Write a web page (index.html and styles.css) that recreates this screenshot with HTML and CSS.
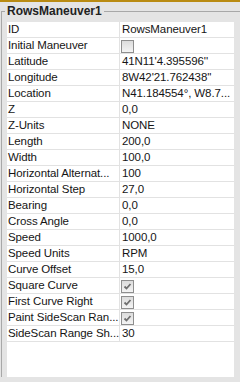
FILE: index.html
```html
<!DOCTYPE html>
<html lang="en">
<head>
    <meta charset="UTF-8">
    <title>RowsManeuver1</title>
    <link rel="stylesheet" href="styles.css">
</head>
<body>

    <fieldset class="group">
        <legend>RowsManeuver1</legend>

        <div class="grid">
            <div class="row"><div class="name">ID</div><div class="value">RowsManeuver1</div></div>
            <div class="row"><div class="name">Initial Maneuver</div><div class="value"><span class="check"></span></div></div>
            <div class="row"><div class="name">Latitude</div><div class="value">41N11'4.395596''</div></div>
            <div class="row"><div class="name">Longitude</div><div class="value">8W42'21.762438''</div></div>
            <div class="row"><div class="name">Location</div><div class="value">N41.184554°, W8.7...</div></div>
            <div class="row"><div class="name">Z</div><div class="value">0,0</div></div>
            <div class="row"><div class="name">Z-Units</div><div class="value">NONE</div></div>
            <div class="row"><div class="name">Length</div><div class="value">200,0</div></div>
            <div class="row"><div class="name">Width</div><div class="value">100,0</div></div>
            <div class="row"><div class="name">Horizontal Alternat...</div><div class="value">100</div></div>
            <div class="row"><div class="name">Horizontal Step</div><div class="value">27,0</div></div>
            <div class="row"><div class="name">Bearing</div><div class="value">0,0</div></div>
            <div class="row"><div class="name">Cross Angle</div><div class="value">0,0</div></div>
            <div class="row"><div class="name">Speed</div><div class="value">1000,0</div></div>
            <div class="row"><div class="name">Speed Units</div><div class="value">RPM</div></div>
            <div class="row"><div class="name">Curve Offset</div><div class="value">15,0</div></div>
            <div class="row"><div class="name">Square Curve</div><div class="value"><span class="check checked"><svg width="11" height="11" viewBox="0 0 11 11"><path d="M2.5 5.5 L4.5 7.5 L8.5 3" fill="none" stroke="#6f6f6f" stroke-width="1.8"/></svg></span></div></div>
            <div class="row"><div class="name">First Curve Right</div><div class="value"><span class="check checked"><svg width="11" height="11" viewBox="0 0 11 11"><path d="M2.5 5.5 L4.5 7.5 L8.5 3" fill="none" stroke="#6f6f6f" stroke-width="1.8"/></svg></span></div></div>
            <div class="row"><div class="name">Paint SideScan Ran...</div><div class="value"><span class="check checked"><svg width="11" height="11" viewBox="0 0 11 11"><path d="M2.5 5.5 L4.5 7.5 L8.5 3" fill="none" stroke="#6f6f6f" stroke-width="1.8"/></svg></span></div></div>
            <div class="row"><div class="name">SideScan Range Sh...</div><div class="value">30</div></div>
        </div>
    </fieldset>

</body>
</html>
```

FILE: styles.css
```css
body {
    margin: 0;
    height: 380px;
    overflow: hidden;
    background-color: #e4e4e4;
    border-top: 2px solid #b98b12;
    font-family: "Liberation Sans", Arial, sans-serif;
    font-size: 11.5px;
    color: #151515;
}

.group {
    margin: 1px -1px 0 1px;
    padding: 3px 6px 0 5px;
    border: 1px solid #a8a8a8;
    border-bottom: none;
    min-width: 0;
}

legend {
    margin-left: -2px;
    padding: 0 2px;
    font-weight: bold;
    font-size: 12px;
    line-height: 16px;
    color: #222;
}

.grid {
    height: 355px;
    background: white;
}

.row {
    display: grid;
    grid-template-columns: 113px 1fr;
    height: 15px;
    border-bottom: 1px solid #e2e2e2;
    line-height: 15px;
}

.name {
    padding-left: 1px;
    border-right: 1px solid #e2e2e2;
    white-space: nowrap;
    overflow: hidden;
    letter-spacing: -0.1px;
}

.value {
    padding-left: 2px;
    white-space: nowrap;
    overflow: hidden;
    letter-spacing: -0.1px;
}

.check {
    display: block;
    width: 11px;
    height: 11px;
    margin: 2px 0 0 -1px;
    border: 1px solid #8e8e8e;
    background: linear-gradient(#dcdcdc, #f4f4f4);
}

    .check svg {
        display: block;
    }
```
